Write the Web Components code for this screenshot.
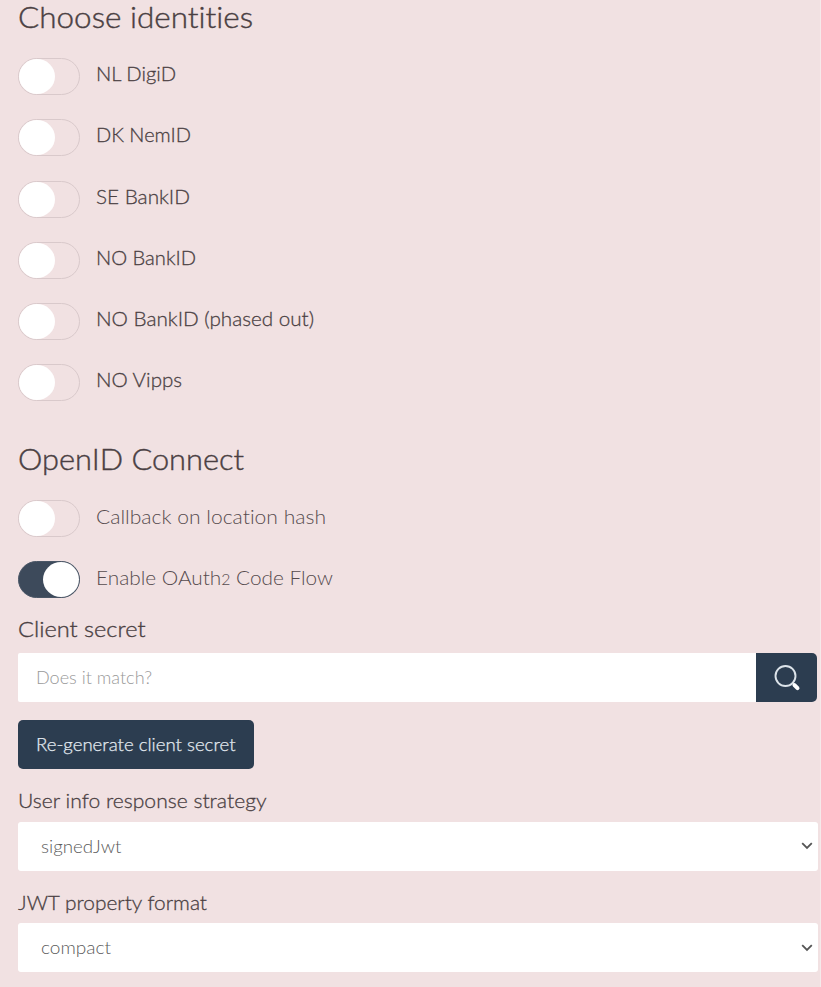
<!DOCTYPE html>
<html lang="en">
<head>
<meta charset="utf-8">
<title>Identity settings</title>
<style>
html,body{margin:0;height:100%;background:#f1e1e2}
body{overflow:hidden;font-family:Lato,"Open Sans",sans-serif;font-weight:300;font-variant-ligatures:none;color:#4a3f42}
</style>
</head>
<body>
<settings-page>
  <settings-section>
    <fit-text slot="title" measure="235">Choose identities</fit-text>
    <toggle-row><fit-text measure="80">NL DigiD</fit-text></toggle-row>
    <toggle-row><fit-text measure="95">DK NemID</fit-text></toggle-row>
    <toggle-row><fit-text measure="94">SE BankID</fit-text></toggle-row>
    <toggle-row><fit-text measure="100">NO BankID</fit-text></toggle-row>
    <toggle-row><fit-text measure="218">NO BankID (phased out)</fit-text></toggle-row>
    <toggle-row><fit-text measure="86">NO Vipps</fit-text></toggle-row>
  </settings-section>
  <settings-section class="oidc">
    <fit-text slot="title" measure="226">OpenID Connect</fit-text>
    <toggle-row light><fit-text measure="230">Callback on location hash</fit-text></toggle-row>
    <toggle-row light on><fit-text measure="237">Enable OAuth<span style="font-size:.76em">2</span> Code Flow</fit-text></toggle-row>
  </settings-section>
  <secret-field>
    <fit-text slot="label" measure="127.5">Client secret</fit-text>
    <fit-text slot="placeholder" measure="116">Does it match?</fit-text>
    <fit-text slot="action" measure="199.5">Re-generate client secret</fit-text>
  </secret-field>
  <select-field>
    <fit-text slot="label" measure="248.5">User info response strategy</fit-text>
    <fit-text measure="80.5">signedJwt</fit-text>
  </select-field>
  <select-field>
    <fit-text slot="label" measure="189">JWT property format</fit-text>
    <fit-text measure="70">compact</fit-text>
  </select-field>
</settings-page>
<script>
const define = (name, html, setup) => customElements.define(name, class extends HTMLElement {
  constructor() { super(); this.attachShadow({mode:'open'}).innerHTML = html; }
  connectedCallback() { if (setup) setup(this); }
});

define('settings-page', `<style>
:host{display:flex;flex-direction:column;box-sizing:border-box;height:987px;padding:0 2px 0 18px;border-right:1px solid #f5eaea}
</style><slot></slot>`);

define('settings-section', `<style>
:host{display:block;height:425.5px}
:host(.oidc){height:190.5px;padding-top:16px;box-sizing:border-box}
h2{margin:0;font-size:29.5px;line-height:34px;font-weight:300;height:58px;-webkit-text-stroke:.4px currentColor}
:host(.oidc) h2{height:58.5px}
.rows{display:flex;flex-direction:column;gap:24.25px}
</style><h2><slot name="title"></slot></h2><div class="rows"><slot></slot></div>`);

define('toggle-row', `<style>
:host{display:flex;height:37px;gap:16px;font-size:20px;-webkit-text-stroke:.28px currentColor}
:host([light]){-webkit-text-stroke:0;color:#564b4e}
.track{box-sizing:border-box;width:62px;height:37px;border:1px solid #d9c9cb;border-radius:19px;display:flex}
.knob{width:36px;height:35px;border-radius:50%;background:#fff}
:host([on]) .track{background:#3d4a5b;border-color:#4a5666;justify-content:flex-end}
.label{line-height:31px}
:host([light]) .label{line-height:32px}
</style><div class="track"><div class="knob"></div></div><div class="label"><slot></slot></div>`);

define('secret-field', `<style>
:host{display:block}
.label{font-size:21.5px;line-height:26px;height:37px;-webkit-text-stroke:.35px currentColor}
.group{display:flex;height:49px;margin-right:1px}
.input{flex:1;display:flex;align-items:center;background:#fff;padding-left:18px;font-size:17.5px;font-weight:300;color:#999;border-radius:2px 0 0 2px}
.search{width:61px;background:#2c3d50;border-radius:0 5px 5px 0;display:grid;place-items:center}
.action{display:flex;align-items:center;box-sizing:border-box;width:236px;height:49px;margin-top:18px;padding-left:18px;border-radius:5px;background:#2c3d50;color:#e3eaf0;font-size:17.5px;-webkit-text-stroke:.25px currentColor}
</style>
<div class="label"><slot name="label"></slot></div>
<div class="group"><div class="input"><slot name="placeholder"></slot></div>
<div class="search"><svg width="28" height="28" viewBox="0 0 28 28" fill="none" stroke-linecap="round"><circle cx="12.5" cy="12" r="10" stroke="#dce3e9" stroke-width="1.9"/><path d="M19.4 19l2 2" stroke="#dce3e9" stroke-width="1.6"/><path d="M21.5 21.2l3 3" stroke="#fff" stroke-width="4"/></svg></div></div>
<div class="action"><slot name="action"></slot></div>`);

define('select-field', `<style>
:host{display:block;height:101.5px;padding-top:19px;box-sizing:border-box}
.label{font-size:19.7px;line-height:25px;height:33.5px;-webkit-text-stroke:.28px currentColor}
.box{display:flex;align-items:center;justify-content:space-between;height:49px;background:#fff;border-radius:3px;padding:0 5px 0 23px;font-size:17.5px;font-weight:300;color:#5c5c5c}
</style>
<div class="label"><slot name="label"></slot></div>
<div class="box"><slot></slot><svg width="12" height="8" viewBox="0 0 12 8" fill="none" stroke="#555" stroke-width="1.8"><path d="M1.2 1.2L6 6l4.8-4.8"/></svg></div>`);

// Widens or narrows its text to the width given in "measure".
define('fit-text', `<style>:host{display:inline-block;white-space:nowrap;transform-origin:0 50%}</style><slot></slot>`, el => {
  const natural = el.getBoundingClientRect().width;
  el.style.transform = 'scaleX(' + (el.getAttribute('measure') / natural).toFixed(4) + ')';
});
</script>
</body>
</html>
